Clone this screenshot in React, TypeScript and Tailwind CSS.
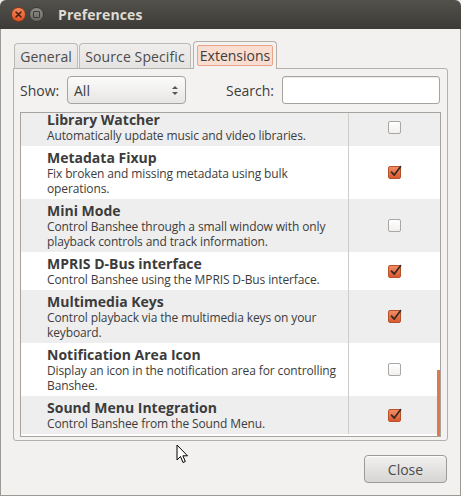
import React from "react";

const rows = [
  { title: "Library Watcher", desc: ["Automatically update music and video libraries."], checked: false },
  { title: "Metadata Fixup", desc: ["Fix broken and missing metadata using bulk", "operations."], checked: true },
  { title: "Mini Mode", desc: ["Control Banshee through a small window with only", "playback controls and track information."], checked: false },
  { title: "MPRIS D-Bus interface", desc: ["Control Banshee using the MPRIS D-Bus interface."], checked: true },
  { title: "Multimedia Keys", desc: ["Control playback via the multimedia keys on your", "keyboard."], checked: true },
  { title: "Notification Area Icon", desc: ["Display an icon in the notification area for controlling", "Banshee."], checked: false },
  { title: "Sound Menu Integration", desc: ["Control Banshee from the Sound Menu."], checked: true },
];

function Check({ on }: { on: boolean }) {
  if (!on)
    return (
      <div className="w-[13px] h-[13px] rounded-[2px] border border-[#a9a7a4] bg-gradient-to-b from-white to-[#f1f0ef]" />
    );
  return (
    <div className="relative w-[13px] h-[13px] rounded-[2px] border border-[#b5512c] bg-gradient-to-b from-[#f28c62] to-[#d95a2e]">
      <svg className="absolute left-[0px] top-[-3px]" width="14" height="14" viewBox="0 0 14 14">
        <path d="M2.5 8.2 L5.3 11 L11.5 2.8" stroke="#3b2a22" strokeWidth="1.8" fill="none" strokeLinecap="round" strokeLinejoin="round" />
      </svg>
    </div>
  );
}

export default function App() {
  return (
    <div className="w-[461px] h-[496px] bg-[#e9e9e9] font-['Open_Sans',sans-serif] text-[#3c3c3c] relative overflow-hidden">
      {/* title bar */}
      <div className="h-[29px] rounded-t-[6px] bg-gradient-to-b from-[#52514c] to-[#3c3b37] flex items-center">
        <div className="ml-[11px] w-[15px] h-[15px] rounded-full bg-gradient-to-b from-[#f6875a] to-[#e0531f] border border-[#8a3315] flex items-center justify-center">
          <svg width="9" height="9" viewBox="0 0 9 9">
            <path d="M2 2 L7 7 M7 2 L2 7" stroke="#4a2012" strokeWidth="1.6" strokeLinecap="round" />
          </svg>
        </div>
        <div className="ml-[3px] w-[15px] h-[15px] rounded-full bg-gradient-to-b from-[#8f8d88] to-[#6a6863] border border-[#3a3935] flex items-center justify-center">
          <div className="w-[7px] h-[7px] border border-[#3c3b37] rounded-[1px]" />
        </div>
        <div className="ml-[14px] text-[14px] font-bold text-[#dfdbd2] tracking-[0.1px]">Preferences</div>
      </div>

      {/* body */}
      <div className="h-[467px] bg-[#f2f1f0] border-x border-b border-[#9b9994] pl-[12px] pr-[13px] flex flex-col">
        {/* tabs */}
        <div className="pt-[12px] h-[39px] flex items-end text-[14px] text-[#4c4c4c] relative z-10">
          <div className="ml-[1px] w-[64px] h-[25px] rounded-t-[4px] border border-b-0 border-[#bdbab6] bg-gradient-to-b from-[#efeeed] to-[#e4e3e1] flex items-center justify-center">
            General
          </div>
          <div className="ml-[1px] w-[112px] h-[25px] rounded-t-[4px] border border-b-0 border-[#bdbab6] bg-gradient-to-b from-[#efeeed] to-[#e4e3e1] flex items-center justify-center tracking-[0.1px]">
            Source Specific
          </div>
          <div className="ml-[2px] w-[84px] h-[28px] mb-[-1px] rounded-t-[4px] border border-b-0 border-[#b4b1ad] bg-[#f3f2f1] flex items-start justify-center pt-[3px]">
            <div className="w-[76px] h-[21px] rounded-[2px] border border-[#e9a488] bg-[#f8ddd0] flex items-center justify-center text-[#3c3c3c]">
              Extensions
            </div>
          </div>
        </div>

        {/* panel */}
        <div className="w-[435px] h-[373px] rounded-[3px] rounded-tl-none border border-[#b4b1ad] bg-[#f3f2f1] pt-[7px] pl-[6px] pr-[7px] flex flex-col">
          <div className="h-[28px] flex items-center text-[14px]">
            <span className="w-[47px]">Show:</span>
            <div className="w-[119px] h-[28px] rounded-[4px] border border-[#a6a39f] bg-gradient-to-b from-[#fbfbfa] to-[#e7e6e4] flex items-center pl-[6px] pr-[6px]">
              <span className="flex-1">All</span>
              <svg width="8" height="13" viewBox="0 0 8 13">
                <path d="M1 5 L4 2 L7 5 Z" fill="#555" />
                <path d="M1 8 L4 11 L7 8 Z" fill="#555" />
              </svg>
            </div>
            <span className="ml-[40px] w-[56px]">Search:</span>
            <div className="w-[158px] h-[28px] rounded-[3px] border border-[#a6a39f] bg-white shadow-[inset_0_1px_1px_rgba(0,0,0,0.08)]" />
          </div>

          <div className="mt-[8px] w-[421px] h-[325px] border border-[#a7a4a0] bg-white overflow-hidden relative">
            <div className="mt-[-5px]">
              {rows.map((r, i) => (
                <div key={r.title} className={`flex ${i % 2 === 0 ? "bg-[#eeeeee]" : "bg-white"}`}>
                  <div className="w-[327px] pl-[26px] pt-[3px] pb-[3px] whitespace-nowrap overflow-hidden">
                    <div className="h-[17px] leading-[17px] text-[14px] font-bold text-[#3c3c3c]">{r.title}</div>
                    {r.desc.map((d) => (
                      <div key={d} className="h-[15px] leading-[15px] text-[12px] tracking-[-0.12px]">{d}</div>
                    ))}
                  </div>
                  <div className="flex-1 border-l border-[#cfcdca] flex items-center justify-center">
                    <Check on={r.checked} />
                  </div>
                </div>
              ))}
            </div>
            <div className="absolute right-0 top-[257px] bottom-0 w-[3px] bg-[#e0784c]" />
          </div>
        </div>

        {/* bottom */}
        <div className="mt-[14px] flex justify-end">
          <button className="w-[83px] h-[28px] rounded-[4px] border border-[#9d9a97] bg-gradient-to-b from-[#f2f1f0] to-[#d6d5d3] text-[14px] text-[#4c4c4c] shadow-[inset_0_1px_0_rgba(255,255,255,0.8)]">
            Close
          </button>
        </div>
      </div>

      {/* mouse pointer */}
      <svg className="absolute left-[176px] top-[444px]" width="13" height="20" viewBox="0 0 13 20">
        <path d="M1 1 L1 16 L4.5 12.5 L7 18.5 L9.3 17.5 L6.9 11.8 L11.5 11.8 Z" fill="white" stroke="black" strokeWidth="1" strokeLinejoin="round" />
      </svg>
    </div>
  );
}
